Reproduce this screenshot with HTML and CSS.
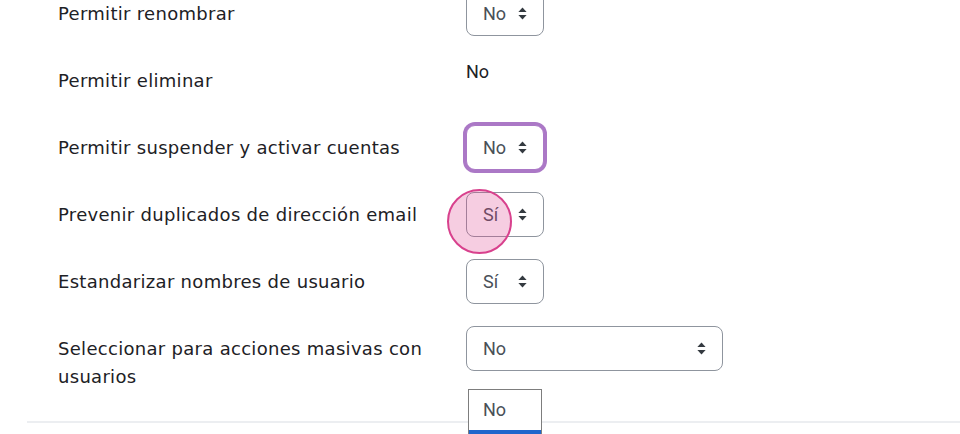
FILE: index.html
```html
<!DOCTYPE html>
<html lang="es">
<head>
<meta charset="utf-8">
<title>Ajustes</title>
<link rel="stylesheet" href="styles.css">
</head>
<body>
<div class="page">
  <div class="form">
    <div class="row">
      <div class="label">Permitir renombrar</div>
      <div class="control">
        <div class="select"><span class="val">No</span><svg class="chev" viewBox="0 0 9 13" width="9" height="13"><path d="M4.5 0.5 L8.6 5 H0.4 Z"/><path d="M0.4 8 H8.6 L4.5 12.5 Z"/></svg></div>
      </div>
    </div>
    <div class="row">
      <div class="label">Permitir eliminar</div>
      <div class="control"><div class="static">No</div></div>
    </div>
    <div class="row">
      <div class="label">Permitir suspender y activar cuentas</div>
      <div class="control">
        <div class="select focus"><span class="val">No</span><svg class="chev" viewBox="0 0 9 13" width="9" height="13"><path d="M4.5 0.5 L8.6 5 H0.4 Z"/><path d="M0.4 8 H8.6 L4.5 12.5 Z"/></svg></div>
      </div>
    </div>
    <div class="row">
      <div class="label">Prevenir duplicados de dirección email</div>
      <div class="control">
        <div class="select"><span class="val">Sí</span><svg class="chev" viewBox="0 0 9 13" width="9" height="13"><path d="M4.5 0.5 L8.6 5 H0.4 Z"/><path d="M0.4 8 H8.6 L4.5 12.5 Z"/></svg></div>
      </div>
    </div>
    <div class="row">
      <div class="label">Estandarizar nombres de usuario</div>
      <div class="control">
        <div class="select"><span class="val">Sí</span><svg class="chev" viewBox="0 0 9 13" width="9" height="13"><path d="M4.5 0.5 L8.6 5 H0.4 Z"/><path d="M0.4 8 H8.6 L4.5 12.5 Z"/></svg></div>
      </div>
    </div>
    <div class="row">
      <div class="label">Seleccionar para acciones masivas con usuarios</div>
      <div class="control">
        <div class="select wide"><span class="val">No</span><svg class="chev" viewBox="0 0 9 13" width="9" height="13"><path d="M4.5 0.5 L8.6 5 H0.4 Z"/><path d="M0.4 8 H8.6 L4.5 12.5 Z"/></svg></div>
      </div>
    </div>
  </div>
  <div class="divider"></div>
  <div class="popup">
    <div class="opt">No</div>
    <div class="opt selected"></div>
  </div>
  <div class="touch"></div>
</div>
</body>
</html>
```
FILE: styles.css
```css
html, body {
  margin: 0;
  padding: 0;
  background: #ffffff;
  overflow: hidden;
}
body {
  width: 960px;
  height: 434px;
}
.page {
  position: relative;
  width: 960px;
  height: 434px;
  overflow: hidden;
}
.form {
  margin-top: -9px;
  padding-left: 58px;
}
.row {
  display: flex;
  align-items: flex-start;
  min-height: 45px;
  margin-bottom: 22px;
}
.label {
  width: 392px;
  padding-right: 16px;
  padding-top: 9px;
  font-family: "DejaVu Sans", "Open Sans", sans-serif;
  font-size: 18px;
  letter-spacing: 0.3px;
  line-height: 28px;
  color: #1d2125;
}
.control {
  flex: 1;
}
.static {
  font-family: Roboto, "Liberation Sans", sans-serif;
  font-size: 18px;
  line-height: 28px;
  color: #1d2125;
}
.select {
  box-sizing: border-box;
  width: 78px;
  height: 45px;
  border: 1px solid #8f959e;
  border-radius: 8px;
  padding: 0 16px;
  display: flex;
  align-items: center;
  justify-content: space-between;
  font-family: Roboto, "Liberation Sans", sans-serif;
  font-size: 18px;
  color: #495057;
  background: #fff;
}
.select.wide {
  width: 257px;
}
.select.focus {
  border-color: #ab78c6;
  box-shadow: 0 0 0 3px #ab78c6;
  border-radius: 9px;
}
.chev {
  fill: #343a40;
  display: block;
}
.divider {
  height: 2px;
  background: #eceef1;
  margin: 30px 0 0 27px;
}
.popup {
  position: absolute;
  left: 468px;
  top: 389px;
  width: 74px;
  box-sizing: border-box;
  border: 1px solid #7d7d7d;
  border-bottom: none;
  background: #fff;
  font-family: Roboto, "Liberation Sans", sans-serif;
  font-size: 18px;
}
.opt {
  height: 40px;
  line-height: 40px;
  padding-left: 14px;
  color: #495057;
}
.opt.selected {
  background: #1f66cc;
}
.touch {
  position: absolute;
  left: 447px;
  top: 189px;
  width: 65px;
  height: 65px;
  box-sizing: border-box;
  border-radius: 50%;
  border: 2px solid #d8418d;
  background: rgba(222, 60, 140, 0.26);
}
```
